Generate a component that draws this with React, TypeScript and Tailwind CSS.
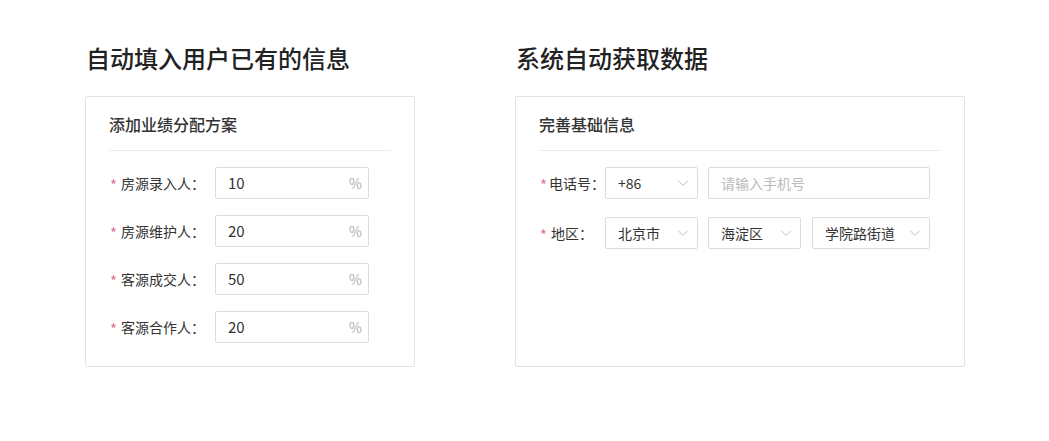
import React from "react";

const font = { fontFamily: '"Noto Sans CJK SC", "Noto Sans", sans-serif' };

function Chevron() {
  return (
    <svg width="12" height="12" viewBox="0 0 12 12" fill="none" className="shrink-0">
      <path d="M1 3.5 L6 8.5 L11 3.5" stroke="#bfbfbf" strokeWidth="1" />
    </svg>
  );
}

function Label({ text, w }: { text: string; w: string }) {
  return (
    <div className={`${w} shrink-0 whitespace-nowrap flex items-center text-[14px] text-[#333]`}>
      <span className="inline-block w-[12px] text-[#e3738f] text-[15px] leading-none pt-[3px] pl-[1px]">*</span>
      <span>{text}：</span>
    </div>
  );
}

function PercentInput({ value }: { value: string }) {
  return (
    <div className="w-[154px] shrink-0 h-[32px] border border-[#dcdcdc] rounded-[2px] flex items-center pl-[12px] pr-[6px] text-[14px]">
      <span className="flex-1 text-[#333] text-[15px]">{value}</span>
      <span className="text-[#b0b0b0]">%</span>
    </div>
  );
}

function Select({ value, w }: { value: string; w: string }) {
  return (
    <div className={`${w} shrink-0 h-[32px] border border-[#dcdcdc] rounded-[2px] flex items-center pl-[12px] pr-[8px] text-[14px] whitespace-nowrap`}>
      <span className="flex-1 text-[#333]">{value}</span>
      <Chevron />
    </div>
  );
}

export default function App() {
  const rows = [
    ["房源录入人", "10"],
    ["房源维护人", "20"],
    ["客源成交人", "50"],
    ["客源合作人", "20"],
  ];
  return (
    <div className="w-[1049px] h-[441px] bg-white pt-[42px] pl-[85px] flex gap-[100px]" style={font}>
      <div className="flex flex-col">
        <h1 className="text-[24px] leading-[32px] font-medium text-[#222] pl-[1px] mb-[22px]">自动填入用户已有的信息</h1>
        <div className="w-[330px] h-[271px] border border-[#e3e3e3] rounded-[2px]">
          <div className="mx-[23px] h-[54px] border-b border-[#ececec] flex items-center text-[16px] font-medium text-[#333]">
            添加业绩分配方案
          </div>
          <div className="px-[23px] pt-[16px] flex flex-col gap-[16px]">
            {rows.map(([l, v]) => (
              <div key={l} className="flex items-center">
                <Label text={l} w="w-[106px]" />
                <PercentInput value={v} />
              </div>
            ))}
          </div>
        </div>
      </div>
      <div className="flex flex-col">
        <h1 className="text-[24px] leading-[32px] font-medium text-[#222] pl-[1px] mb-[22px]">系统自动获取数据</h1>
        <div className="w-[450px] h-[271px] border border-[#e3e3e3] rounded-[2px]">
          <div className="mx-[23px] h-[54px] border-b border-[#ececec] flex items-center text-[16px] font-medium text-[#333]">
            完善基础信息
          </div>
          <div className="px-[23px] pt-[16px] flex flex-col gap-[18px]">
            <div className="flex items-center">
              <Label text="电话号" w="w-[66px]" />
              <Select value="+86" w="w-[93px]" />
              <div className="ml-[10px] w-[222px] shrink-0 h-[32px] border border-[#dcdcdc] rounded-[2px] flex items-center pl-[12px] text-[14px] text-[#bbb]">
                请输入手机号
              </div>
            </div>
            <div className="flex items-center">
              <Label text="地区" w="w-[66px]" />
              <Select value="北京市" w="w-[93px]" />
              <div className="ml-[10px]"><Select value="海淀区" w="w-[93px]" /></div>
              <div className="ml-[11px]"><Select value="学院路街道" w="w-[118px]" /></div>
            </div>
          </div>
        </div>
      </div>
    </div>
  );
}
